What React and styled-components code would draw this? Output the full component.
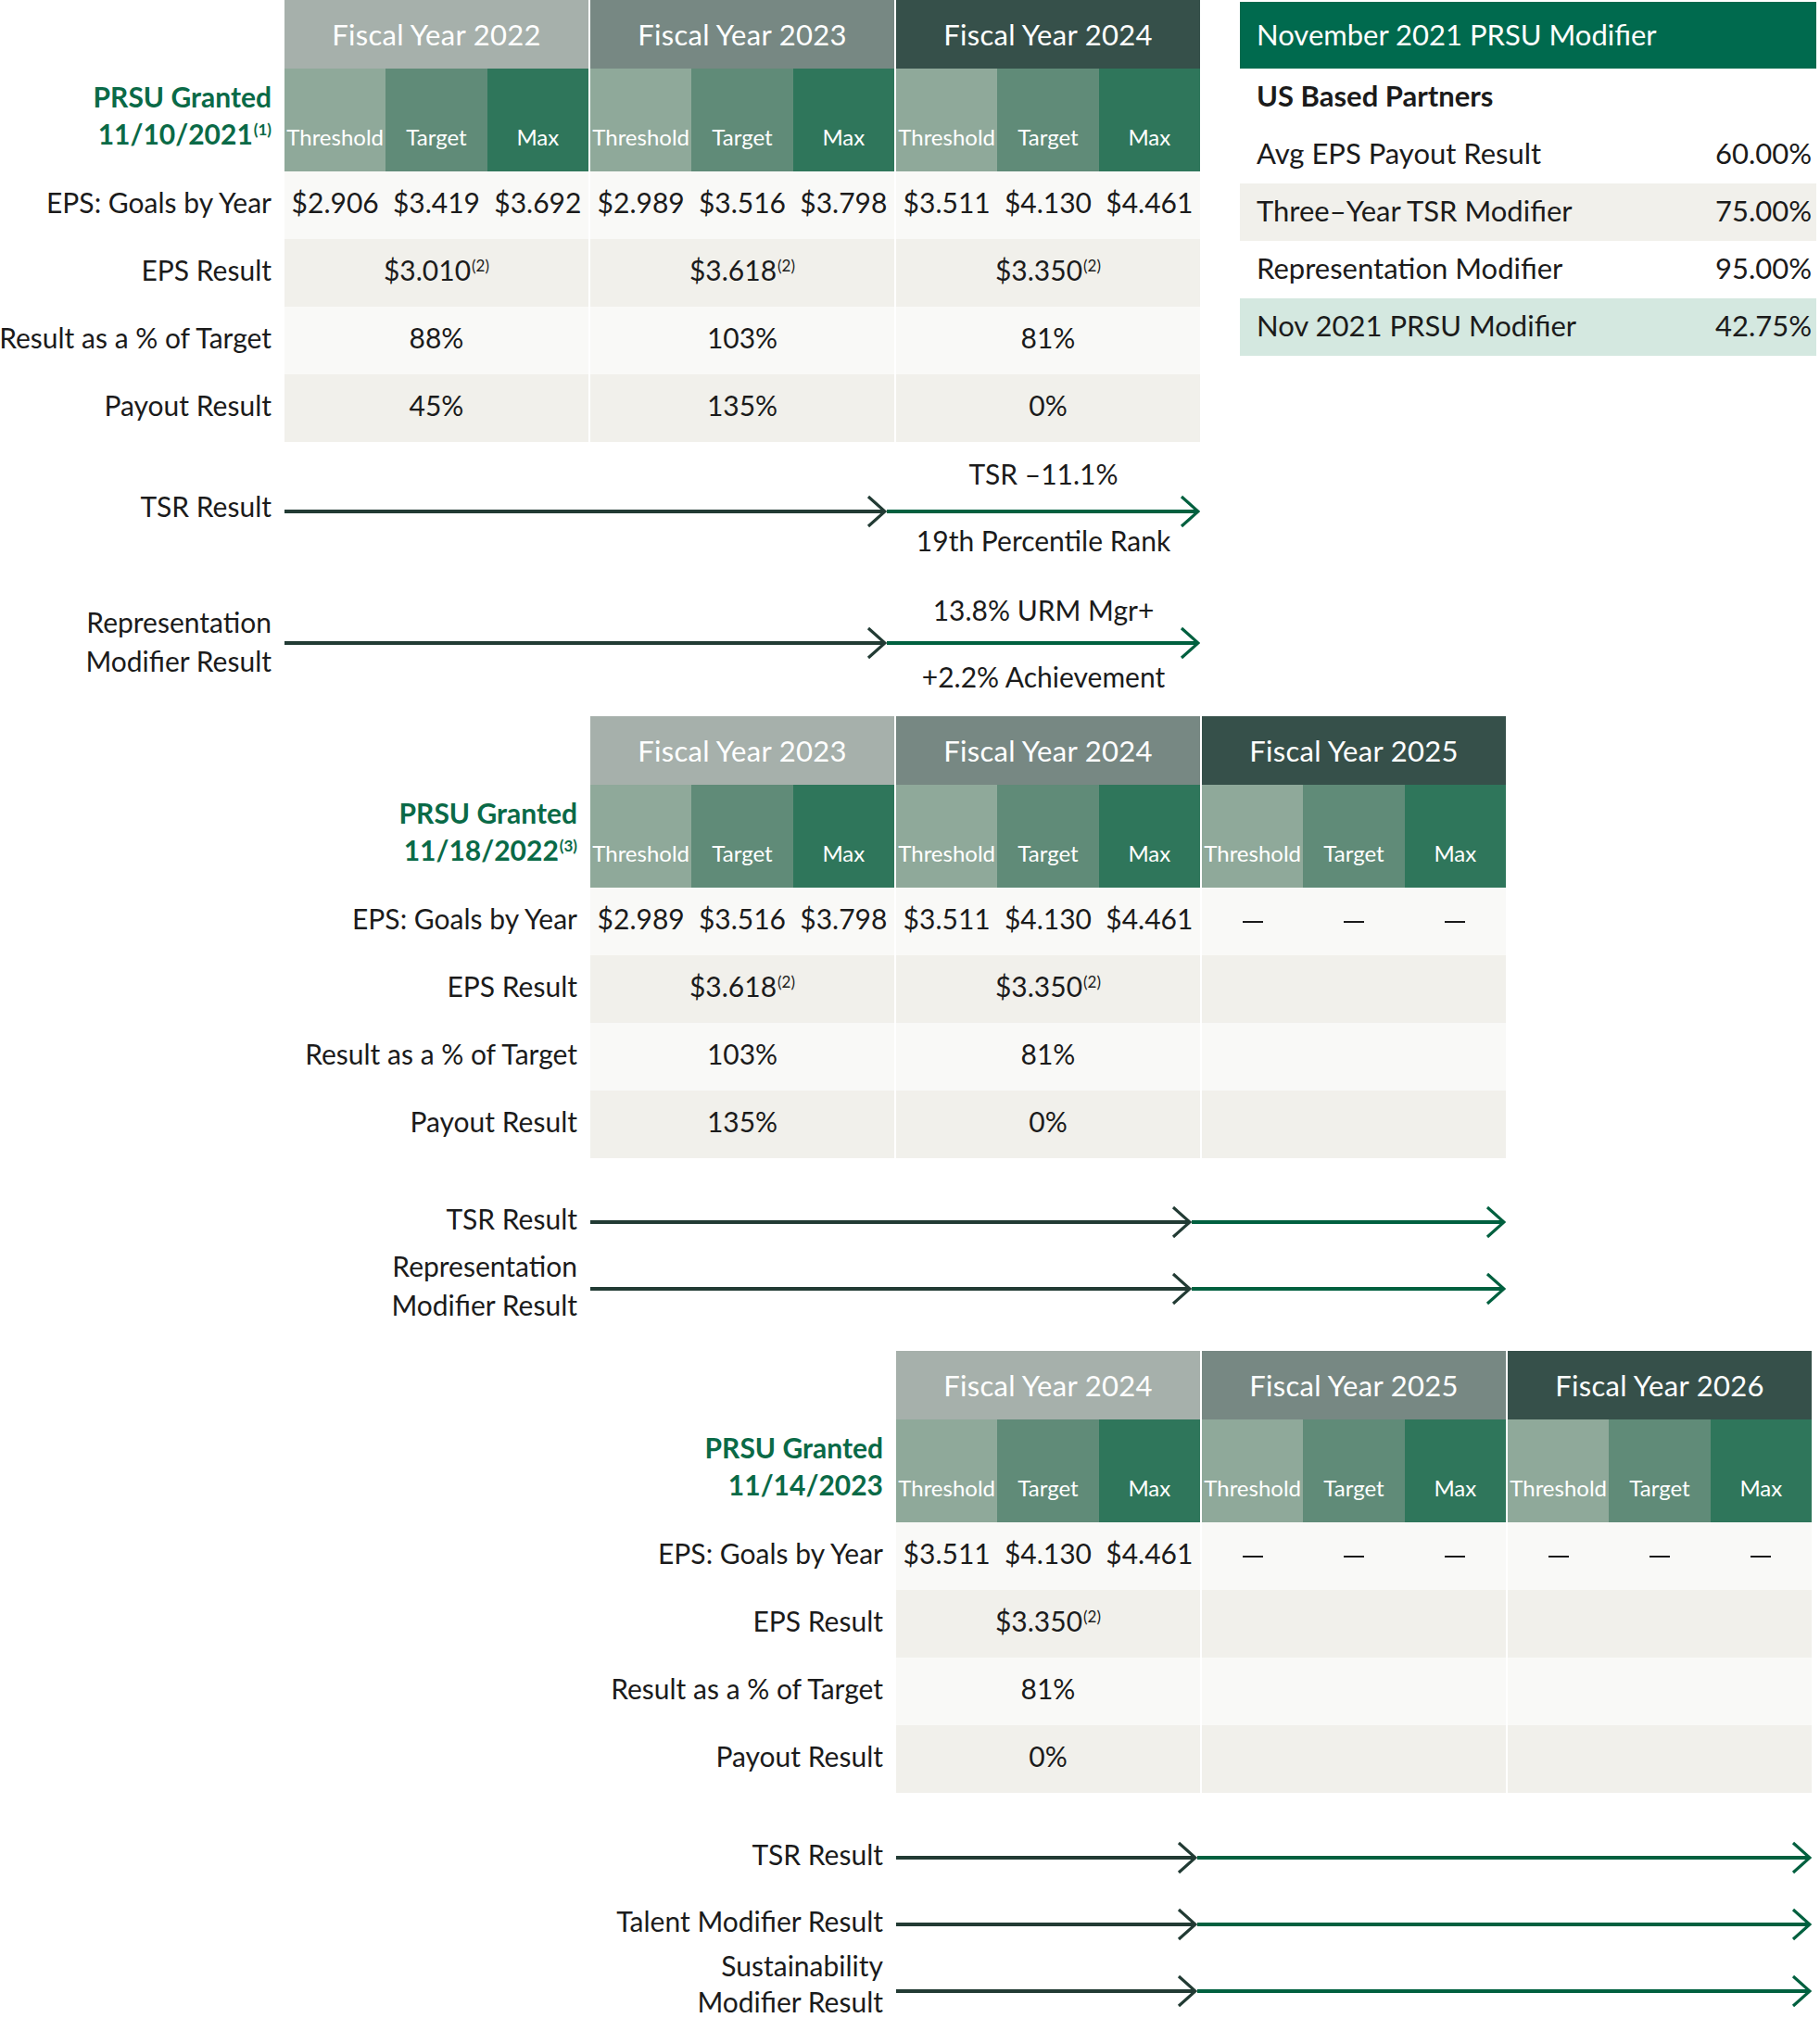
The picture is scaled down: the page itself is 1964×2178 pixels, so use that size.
import React from "react";
import styled, { createGlobalStyle } from "styled-components";

// one fiscal-year group is 3 sub columns wide, groups are split by a 2px white gap
const GROUP = 328;
const GAP = 2;
const SUBS = ["Threshold", "Target", "Max"];
const HEAD_COLORS = ["#a6b0ab", "#778883", "#36504a"];
const SUB_COLORS = ["#8fa99a", "#608b78", "#2f765b"];
const SHADES = { light: "#f9f9f7", dark: "#f1f0eb" };

const GlobalStyle = createGlobalStyle`
  *, *::before, *::after { box-sizing: border-box; }
  html, body {
    margin: 0;
    padding: 0;
    background: #fff;
    overflow: hidden;
  }
  body {
    font-family: Lato, "Open Sans", "Liberation Sans", sans-serif;
    color: #1b1b1b;
  }
`;

const Page = styled.div`
  width: 1964px;
  height: 2178px;
  overflow: hidden;
  display: flex;
  flex-direction: column;
`;

const SectionRow = styled.div`
  display: flex;
  align-items: flex-start;
  gap: 43px;
  margin-top: ${(p) => p.$top}px;
`;

const TableGrid = styled.div`
  display: grid;
  grid-template-columns: ${(p) => p.$label}px repeat(3, ${GROUP}px);
  grid-template-rows: 74px 111px repeat(4, 73px);
  column-gap: ${GAP}px;
`;

const YearHead = styled.div`
  background: ${(p) => HEAD_COLORS[p.$tone]};
  color: #fff;
  font-size: 31px;
  letter-spacing: 0.3px;
  display: flex;
  align-items: center;
  justify-content: center;
`;

const SubGroup = styled.div`
  display: grid;
  grid-template-columns: repeat(3, 1fr);
`;

const SubHead = styled.div`
  background: ${(p) => SUB_COLORS[p.$tone]};
  color: #fff;
  font-size: 24px;
  line-height: 24px;
  display: flex;
  align-items: flex-end;
  justify-content: center;
  padding-bottom: 25px;
  white-space: nowrap;
`;

const GrantLabel = styled.div`
  display: flex;
  align-items: flex-end;
  justify-content: flex-end;
  padding: 0 12px 21px 0;
  text-align: right;
  color: #0a6a47;
  font-size: 30px;
  font-weight: 700;
  line-height: 40px;
  white-space: nowrap;
`;

const RowLabel = styled.div`
  display: flex;
  align-items: center;
  justify-content: flex-end;
  padding: 0 12px 8px 0;
  font-size: 30px;
  white-space: nowrap;
`;

const DataCell = styled.div`
  background: ${(p) => SHADES[p.$shade]};
  display: flex;
  align-items: center;
  justify-content: center;
  padding-bottom: 8px;
  font-size: 30px;
  white-space: nowrap;
`;

const GoalCell = styled.div`
  background: ${(p) => SHADES[p.$shade]};
  display: grid;
  grid-template-columns: repeat(3, 1fr);
  align-items: center;
  justify-items: center;
  padding-bottom: 8px;
`;

const GoalValue = styled.span`
  font-size: 30px;
  white-space: nowrap;
`;

const Dash = styled.span`
  display: block;
  width: 22px;
  height: 2px;
  margin-top: 8px;
  background: #1b1b1b;
`;

const Sup = styled.sup`
  font-size: 17px;
  line-height: 0;
  vertical-align: 10px;
  margin-left: 1px;
`;

const Panel = styled.div`
  width: 622px;
  margin-top: 2px;
`;

const PanelHead = styled.div`
  height: 72px;
  background: #006a4e;
  color: #fff;
  font-size: 31px;
  display: flex;
  align-items: center;
  padding: 0 0 3px 18px;
`;

const PanelRow = styled.div`
  height: 62px;
  display: grid;
  grid-template-columns: 495px 1fr;
  align-items: center;
  padding: 0 0 4px 18px;
  background: ${(p) => p.$bg || "transparent"};
  font-size: 31px;
  font-weight: ${(p) => (p.$bold ? 700 : 400)};
  white-space: nowrap;
`;

const ArrowGrid = styled.div`
  display: grid;
  grid-template-columns: ${(p) => p.$label}px ${(p) => p.$dark}px ${(p) => p.$green}px;
  grid-template-rows: ${(p) => (p.$notes ? "40px 36px 36px" : "0px 72px 0px")};
  margin-top: ${(p) => p.$top}px;
`;

const ArrowLabel = styled.div`
  grid-column: 1;
  grid-row: 1 / 4;
  min-height: 0;
  display: flex;
  align-items: center;
  justify-content: flex-end;
  padding: 0 14px ${(p) => p.$lift}px 0;
  font-size: 30px;
  line-height: ${(p) => (p.$tight ? 39 : 42)}px;
  text-align: right;
  white-space: nowrap;
`;

const NoteAbove = styled.div`
  grid-column: 3;
  grid-row: 1;
  display: flex;
  align-items: flex-end;
  justify-content: center;
  padding-bottom: ${(p) => p.$lift}px;
  font-size: 30px;
  line-height: 36px;
  white-space: nowrap;
`;

const NoteBelow = styled.div`
  grid-column: 3;
  grid-row: 3;
  text-align: center;
  margin-top: ${(p) => -p.$lift}px;
  font-size: 30px;
  line-height: 36px;
  white-space: nowrap;
`;

const SegCell = styled.div`
  grid-column: ${(p) => p.$col};
  grid-row: 2;
  display: flex;
  align-items: center;
`;

const LineSvg = styled.svg`
  display: block;
`;

const Segment = ({ width, color }) => {
  const h = 36;
  const cy = h / 2;
  const tip = width - 2;
  return (
    <LineSvg width={width} height={h} viewBox={`0 0 ${width} ${h}`}>
      <line x1="0" y1={cy} x2={tip - 1} y2={cy} stroke={color} strokeWidth="4" />
      <polyline
        points={`${tip - 18},${cy - 16} ${tip},${cy} ${tip - 18},${cy + 16}`}
        fill="none"
        stroke={color}
        strokeWidth="3.2"
      />
    </LineSvg>
  );
};

const ArrowRow = ({ x, dark, green, top, label, above, below, tight, lift = 8, noteLift = 0 }) => {
  const notes = Boolean(above || below);
  return (
    <ArrowGrid $label={x} $dark={dark} $green={green} $top={top} $notes={notes}>
      <ArrowLabel $tight={tight} $lift={lift}>
        <div>
          {label.map((l) => (
            <div key={l}>{l}</div>
          ))}
        </div>
      </ArrowLabel>
      {notes && <NoteAbove $lift={noteLift}>{above}</NoteAbove>}
      <SegCell $col={2}>
        <Segment width={dark} color="#223b34" />
      </SegCell>
      <SegCell $col={3}>
        <Segment width={green} color="#00603f" />
      </SegCell>
      {notes && <NoteBelow $lift={noteLift}>{below}</NoteBelow>}
    </ArrowGrid>
  );
};

const Section = ({ s, children }) => (
  <SectionRow $top={s.top}>
    <TableGrid $label={s.x - GAP}>
      <span />
      {s.years.map((y, i) => (
        <YearHead key={y} $tone={i}>
          Fiscal Year {y}
        </YearHead>
      ))}
      <GrantLabel>
        <div>
          PRSU Granted
          <br />
          {s.date}
          {s.sup && <Sup>{s.sup}</Sup>}
        </div>
      </GrantLabel>
      {s.years.map((y) => (
        <SubGroup key={y}>
          {SUBS.map((name, i) => (
            <SubHead key={name} $tone={i}>
              {name}
            </SubHead>
          ))}
        </SubGroup>
      ))}

      <RowLabel>EPS: Goals by Year</RowLabel>
      {s.goals.map((g, i) => (
        <GoalCell key={i} $shade="light">
          {g
            ? g.map((v) => <GoalValue key={v}>{v}</GoalValue>)
            : SUBS.map((name) => <Dash key={name} />)}
        </GoalCell>
      ))}

      <RowLabel>EPS Result</RowLabel>
      {s.results.map((v, i) => (
        <DataCell key={i} $shade="dark">
          {v && (
            <span>
              {v}
              <Sup>(2)</Sup>
            </span>
          )}
        </DataCell>
      ))}

      <RowLabel>Result as a % of Target</RowLabel>
      {s.pct.map((v, i) => (
        <DataCell key={i} $shade="light">
          {v}
        </DataCell>
      ))}

      <RowLabel>Payout Result</RowLabel>
      {s.payout.map((v, i) => (
        <DataCell key={i} $shade="dark">
          {v}
        </DataCell>
      ))}
    </TableGrid>
    {children}
  </SectionRow>
);

const G22 = ["$2.906", "$3.419", "$3.692"];
const G23 = ["$2.989", "$3.516", "$3.798"];
const G24 = ["$3.511", "$4.130", "$4.461"];

const sections = [
  {
    x: 307,
    top: 0,
    years: [2022, 2023, 2024],
    date: "11/10/2021",
    sup: "(1)",
    goals: [G22, G23, G24],
    results: ["$3.010", "$3.618", "$3.350"],
    pct: ["88%", "103%", "81%"],
    payout: ["45%", "135%", "0%"],
    dark: 650,
    green: 338,
    arrows: [
      {
        label: ["TSR Result"],
        top: 17,
        noteLift: 5,
        above: "TSR –11.1%",
        below: "19th Percentile Rank",
      },
      {
        label: ["Representation", "Modifier Result"],
        top: 30,
        lift: 0,
        above: "13.8% URM Mgr+",
        below: "+2.2% Achievement",
      },
    ],
  },
  {
    x: 637,
    top: 25,
    years: [2023, 2024, 2025],
    date: "11/18/2022",
    sup: "(3)",
    goals: [G23, G24, null],
    results: ["$3.618", "$3.350", ""],
    pct: ["103%", "81%", ""],
    payout: ["135%", "0%", ""],
    dark: 649,
    green: 339,
    arrows: [
      { label: ["TSR Result"], top: 33 },
      { label: ["Representation", "Modifier Result"], top: 0 },
    ],
  },
  {
    x: 967,
    top: 31,
    years: [2024, 2025, 2026],
    date: "11/14/2023",
    goals: [G24, null, null],
    results: ["$3.350", "", ""],
    pct: ["81%", "", ""],
    payout: ["0%", "", ""],
    dark: 325,
    green: 663,
    arrows: [
      { label: ["TSR Result"], top: 34 },
      { label: ["Talent Modifier Result"], top: 0 },
      { label: ["Sustainability", "Modifier Result"], top: 0, tight: true, lift: 16 },
    ],
  },
];

const modifierRows = [
  { label: "Avg EPS Payout Result", value: "60.00%" },
  { label: "Three–Year TSR Modifier", value: "75.00%", bg: "#f1f0eb" },
  { label: "Representation Modifier", value: "95.00%" },
  { label: "Nov 2021 PRSU Modifier", value: "42.75%", bg: "#d4e8e0" },
];

const ModifierPanel = () => (
  <Panel>
    <PanelHead>November 2021 PRSU Modifier</PanelHead>
    <PanelRow $bold>
      <span>US Based Partners</span>
    </PanelRow>
    {modifierRows.map((r) => (
      <PanelRow key={r.label} $bg={r.bg}>
        <span>{r.label}</span>
        <span>{r.value}</span>
      </PanelRow>
    ))}
  </Panel>
);

export default function App() {
  return (
    <>
      <GlobalStyle />
      <Page>
        {sections.map((s, i) => (
          <React.Fragment key={s.date}>
            <Section s={s}>{i === 0 && <ModifierPanel />}</Section>
            {s.arrows.map((a) => (
              <ArrowRow key={a.label.join(" ")} x={s.x} dark={s.dark} green={s.green} {...a} />
            ))}
          </React.Fragment>
        ))}
      </Page>
    </>
  );
}
